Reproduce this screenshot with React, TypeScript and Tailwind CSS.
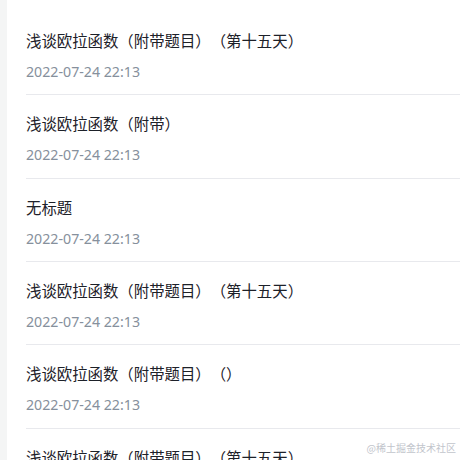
const items = [
  "浅谈欧拉函数（附带题目）（第十五天）",
  "浅谈欧拉函数（附带）",
  "无标题",
  "浅谈欧拉函数（附带题目）（第十五天）",
  "浅谈欧拉函数（附带题目）（）",
  "浅谈欧拉函数（附带题目）（第十五天）",
];

export default function App() {
  return (
    <div className="relative flex h-[460px] w-[460px] overflow-hidden bg-white">
      <div className="w-[7px] shrink-0 bg-[#f4f5f5]" />
      <div className="flex-1 pl-[19px] pt-[12px]">
        {items.map((title, i) => (
          <div key={i} className="h-[83.33px] border-b border-[#e8e9ed] pt-4">
            <div className="text-[15.4px] leading-[24px] text-[#1d2129] font-['Noto_Sans_CJK_SC',sans-serif] whitespace-nowrap [text-spacing-trim:space-all] [font-feature-settings:'chws'_0,'halt'_0]">
              {title}
            </div>
            <div className="mt-[9px] text-[14.2px] leading-[22px] text-[#86909c] font-['Noto_Sans','Noto_Sans_CJK_SC',sans-serif]">
              2022-07-24 22:13
            </div>
          </div>
        ))}
      </div>
      <div className="absolute bottom-[5px] right-[4px] text-[10px] leading-[14px] text-[#c2c5cc] font-['Noto_Sans_CJK_SC',sans-serif]">
        @稀土掘金技术社区
      </div>
    </div>
  );
}
